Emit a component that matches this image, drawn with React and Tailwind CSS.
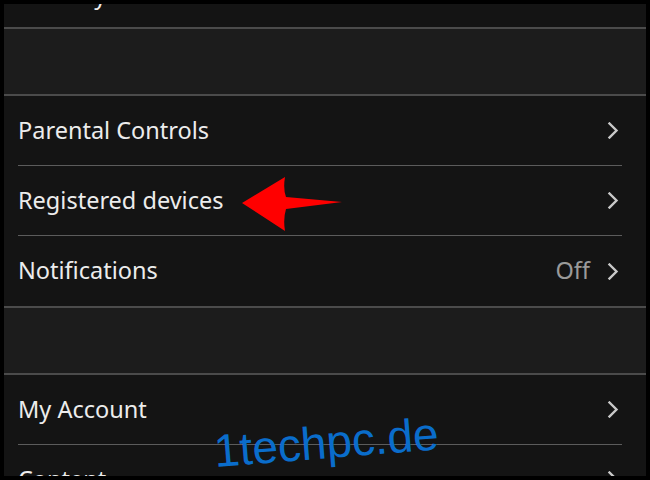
import React from 'react';

const rows = [
  { label: 'Parental Controls' },
  { label: 'Registered devices' },
  { label: 'Notifications', value: 'Off' },
];

function Chevron() {
  return (
    <svg width="12" height="17" viewBox="0 0 12 17" fill="none" className="shrink-0">
      <path d="M2.5 1.5 L9.5 8.5 L2.5 15.5" stroke="#c9c9c9" strokeWidth="2.4" strokeLinecap="square" />
    </svg>
  );
}

function Row({ label, value, last }) {
  return (
    <div className="shrink-0 bg-[#141414] pl-[14px] pr-[24px]">
      <div className={`flex items-center ${last ? 'h-[70px]' : 'h-[70px] border-b border-[#5c5c5c]'}`}>
        <span className="flex-1 text-[23.5px] text-[#ececec]">{label}</span>
        {value && <span className="text-[23.5px] text-[#9a9a9a] mr-[17px]">{value}</span>}
        <div className="mr-[3px]">
          <Chevron />
        </div>
      </div>
    </div>
  );
}

function Divider() {
  return <div className="shrink-0 h-[2px] bg-[#4b4b4b]" />;
}

export default function App() {
  return (
    <div
      className="relative w-[650px] h-[480px] bg-black p-[4px] overflow-hidden"
      style={{ fontFamily: '"Noto Sans", "Open Sans", sans-serif' }}
    >
      <div className="h-full overflow-hidden flex flex-col">
        <div className="h-[23px] shrink-0 bg-[#141414] overflow-hidden pl-[14px]">
          <div className="text-[23.5px] text-[#ececec] leading-[30px] -mt-[24px]">Security</div>
        </div>
        <Divider />
        <div className="h-[65px] shrink-0 bg-[#1c1c1c]" />
        <Divider />
        {rows.map((r, i) => (
          <Row key={r.label} {...r} last={i === rows.length - 1} />
        ))}
        <Divider />
        <div className="h-[65px] shrink-0 bg-[#1c1c1c]" />
        <Divider />
        <Row label="My Account" />
        <Row label="Content" />
      </div>

      <svg className="absolute left-[240px] top-[175px]" width="106" height="60" viewBox="0 0 106 60">
        <path d="M2 28 L45 2 Q43 14 46 22 L102 27 L46 34 Q43 44 45 56 Z" fill="#ff0000" />
      </svg>

      <div
        className="absolute left-[214px] top-[428px] text-[46px] text-[#0a6dcb] leading-none -rotate-[4.5deg] origin-left"
        style={{ fontFamily: '"Liberation Sans", Arial, sans-serif' }}
      >
        1techpc.de
      </div>
    </div>
  );
}
